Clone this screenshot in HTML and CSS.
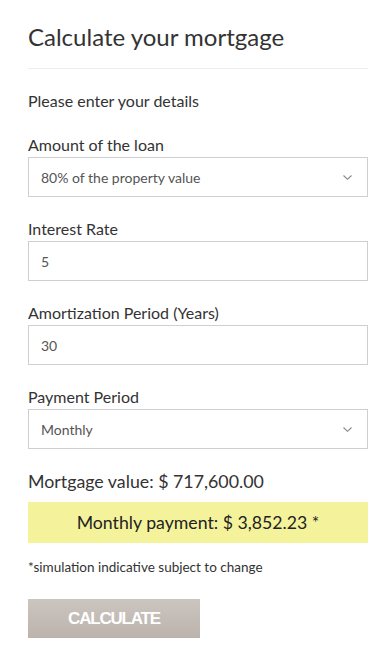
FILE: index.html
```html
<!DOCTYPE html>
<html>
<head>
<meta charset="utf-8">
<link rel="stylesheet" href="styles.css">
</head>
<body>
<div class="calc">
  <h1 class="title">Calculate your mortgage</h1>
  <div class="divider"></div>
  <p class="intro">Please enter your details</p>
  <div class="field">
    <label class="label">Amount of the loan</label>
    <div class="box select"><span>80% of the property value</span>
      <svg class="chev" width="9" height="5" viewBox="0 0 9 5"><path d="M0.5 0.5l4 3.8 4-3.8" fill="none" stroke="#888" stroke-width="1.1"/></svg>
    </div>
  </div>
  <div class="field">
    <label class="label">Interest Rate</label>
    <div class="box"><span>5</span></div>
  </div>
  <div class="field">
    <label class="label">Amortization Period (Years)</label>
    <div class="box"><span>30</span></div>
  </div>
  <div class="field">
    <label class="label">Payment Period</label>
    <div class="box select"><span>Monthly</span>
      <svg class="chev" width="9" height="5" viewBox="0 0 9 5"><path d="M0.5 0.5l4 3.8 4-3.8" fill="none" stroke="#888" stroke-width="1.1"/></svg>
    </div>
  </div>
  <div class="mortgage">Mortgage value: $ 717,600.00</div>
  <div class="payment">Monthly payment: $ 3,852.23 *</div>
  <p class="note">*simulation indicative subject to change</p>
  <button class="btn">CALCULATE</button>
</div>
</body>
</html>
```
FILE: styles.css
```css
html, body { margin: 0; padding: 0; background: #fff; }
body { font-family: Lato, "Open Sans", sans-serif; color: #333; }
.calc { width: 340px; padding: 22px 22px 0 28px; }
.title { font-size: 24px; font-weight: 400; margin: 0; line-height: 30px; color: #333; }
.divider { height: 1px; background: #eeeeee; margin-top: 16px; }
.intro { font-size: 16px; margin: 22px 0 0; line-height: 20px; color: #333; }
.field { margin-top: 24px; }
.field + .field { margin-top: 22px; }
.label { display: block; font-size: 16px; line-height: 20px; margin-bottom: 2px; color: #333; }
.box { box-sizing: border-box; height: 40px; border: 1px solid #cfcfcf; display: flex; align-items: center; justify-content: space-between; padding: 0 15px 0 12px; font-size: 14px; color: #555; }
.chev { display: block; }
.mortgage { font-size: 17.8px; line-height: 22px; margin-top: 21px; color: #333; }
.payment { margin-top: 10px; height: 41px; background: #f4f39c; display: flex; align-items: center; justify-content: center; font-size: 17.7px; color: #222; }
.note { font-size: 13.5px; margin: 16px 0 0; line-height: 16px; color: #333; }
.btn { display: block; margin-top: 24px; width: 172px; height: 39px; border: none; background: linear-gradient(#cbc5c0, #bcb3ac); color: #fff; font-family: "Liberation Sans", Arial, sans-serif; font-weight: 700; font-size: 17px; letter-spacing: -1.2px; padding: 0; }
```
